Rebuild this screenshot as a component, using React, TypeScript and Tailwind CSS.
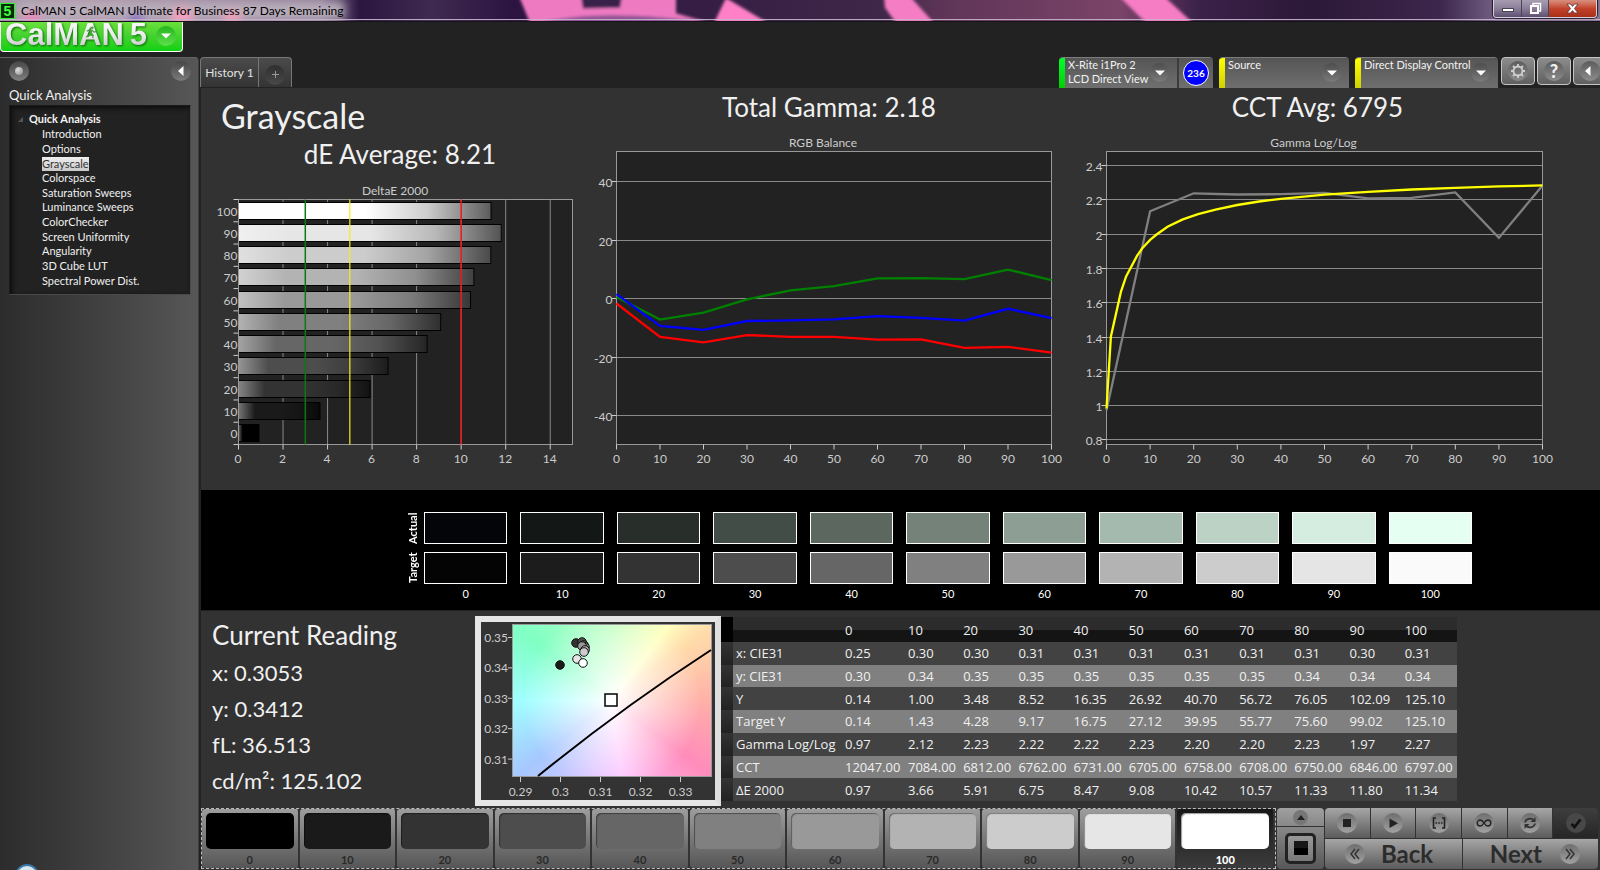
import { useState } from "react";
import type { ReactNode } from "react";
import clsx from "clsx";

type Point = [number, number];

const LEVELS = [0, 10, 20, 30, 40, 50, 60, 70, 80, 90, 100];

const PAGES = [
  "Introduction",
  "Options",
  "Grayscale",
  "Colorspace",
  "Saturation Sweeps",
  "Luminance Sweeps",
  "ColorChecker",
  "Screen Uniformity",
  "Angularity",
  "3D Cube LUT",
  "Spectral Power Dist.",
];

const ACTUAL = [
  "#040508",
  "#131816",
  "#282e2a",
  "#434d47",
  "#5c685f",
  "#74827a",
  "#8d9f95",
  "#a5baaf",
  "#bbd2c5",
  "#d4ede0",
  "#e5fff2",
];

const TARGET = [
  "#040404",
  "#1c1c1c",
  "#333333",
  "#4d4d4d",
  "#666666",
  "#808080",
  "#999999",
  "#b3b3b3",
  "#cccccc",
  "#e5e5e5",
  "#fafafa",
];

const PATCHES = [
  "#000000",
  "#1a1a1a",
  "#333333",
  "#4d4d4d",
  "#666666",
  "#808080",
  "#999999",
  "#b3b3b3",
  "#cccccc",
  "#e6e6e6",
  "#ffffff",
];

const DELTA_E = [0.92, 3.66, 5.91, 6.72, 8.47, 9.08, 10.42, 10.57, 11.33, 11.8, 11.34];

const RGB_BALANCE: { color: string; values: number[] }[] = [
  {
    color: "#008000",
    values: [0.8, -6.9, -4.5, 0, 3.1, 4.5, 7.2, 7.3, 6.9, 10.2, 6.6],
  },
  {
    color: "#ff0000",
    values: [-1.4, -12.8, -14.7, -12.2, -12.8, -12.8, -13.8, -13.7, -16.6, -16.2, -18.2],
  },
  {
    color: "#0000ff",
    values: [1.8, -9.1, -10.4, -7.4, -7.2, -6.8, -5.7, -6.3, -7.3, -3.2, -6.4],
  },
];

const GAMMA_MEASURED = [0.97, 2.13, 2.235, 2.228, 2.23, 2.238, 2.206, 2.208, 2.24, 1.975, 2.28];

const GAMMA_TARGET: Point[] = [
  [0, 0.98],
  [1, 1.4],
  [3.3, 1.66],
  [4.5, 1.75],
  [7, 1.87],
  [8.2, 1.915],
  [10, 1.963],
  [11.5, 1.995],
  [14, 2.04],
  [17.5, 2.083],
  [21, 2.113],
  [25, 2.14],
  [30, 2.167],
  [35, 2.187],
  [40, 2.203],
  [50, 2.227],
  [60, 2.243],
  [70, 2.257],
  [80, 2.267],
  [90, 2.275],
  [100, 2.281],
];

const TABLE: { label: string; values: string[] }[] = [
  {
    label: "x: CIE31",
    values: ["0.25", "0.30", "0.30", "0.31", "0.31", "0.31", "0.31", "0.31", "0.31", "0.30", "0.31"],
  },
  {
    label: "y: CIE31",
    values: ["0.30", "0.34", "0.35", "0.35", "0.35", "0.35", "0.35", "0.35", "0.34", "0.34", "0.34"],
  },
  {
    label: "Y",
    values: ["0.14", "1.00", "3.48", "8.52", "16.35", "26.92", "40.70", "56.72", "76.05", "102.09", "125.10"],
  },
  {
    label: "Target Y",
    values: ["0.14", "1.43", "4.28", "9.17", "16.75", "27.12", "39.95", "55.77", "75.60", "99.02", "125.10"],
  },
  {
    label: "Gamma Log/Log",
    values: ["0.97", "2.12", "2.23", "2.22", "2.22", "2.23", "2.20", "2.20", "2.23", "1.97", "2.27"],
  },
  {
    label: "CCT",
    values: ["12047.00", "7084.00", "6812.00", "6762.00", "6731.00", "6705.00", "6758.00", "6708.00", "6750.00", "6846.00", "6797.00"],
  },
  {
    label: "ΔE 2000",
    values: ["0.97", "3.66", "5.91", "6.75", "8.47", "9.08", "10.42", "10.57", "11.33", "11.80", "11.34"],
  },
];

const toPoints = (points: Point[]) =>
  points.map(([x, y]) => `${x.toFixed(1)},${y.toFixed(1)}`).join(" ");

const TitleBar = () => (
  <header className="relative h-[22px] shrink-0 overflow-hidden border-b border-[#15121a] bg-[#32204a]">
    <svg
      className="absolute inset-0 h-full w-full"
      viewBox="0 0 1600 22"
      preserveAspectRatio="none"
      aria-hidden="true"
    >
      <defs>
        <linearGradient id="aero" x1="0" x2="1" y1="0" y2="0">
          <stop offset="0" stopColor="#9d94a2" />
          <stop offset="0.04" stopColor="#b397ab" />
          <stop offset="0.2" stopColor="#8e7a96" />
          <stop offset="0.225" stopColor="#2b1640" />
          <stop offset="0.27" stopColor="#3f2a50" />
          <stop offset="0.32" stopColor="#2c1440" />
          <stop offset="0.55" stopColor="#3e2748" />
          <stop offset="0.59" stopColor="#5f3557" />
          <stop offset="0.7" stopColor="#7a4468" />
          <stop offset="0.75" stopColor="#3a2148" />
          <stop offset="0.82" stopColor="#2c1838" />
          <stop offset="0.9" stopColor="#3d274c" />
          <stop offset="0.94" stopColor="#79678a" />
          <stop offset="1" stopColor="#8a7490" />
        </linearGradient>
        <filter id="soft" x="-5%" y="-50%" width="110%" height="200%">
          <feGaussianBlur stdDeviation="1.5" />
        </filter>
        <filter id="glow" x="-20%" y="-100%" width="140%" height="300%">
          <feGaussianBlur stdDeviation="5" />
        </filter>
      </defs>
      <rect width="1600" height="22" fill="url(#aero)" />
      <g filter="url(#glow)">
        <rect x="16" y="2" width="328" height="18" fill="#b9afbc" />
        <circle cx="32" cy="21" r="8" fill="#f57bbf" />
        <circle cx="182" cy="19" r="11" fill="#f5a0bd" />
        <circle cx="232" cy="20" r="9" fill="#f0a0b8" />
        <circle cx="136" cy="22" r="8" fill="#7f66c0" />
      </g>
      <g filter="url(#soft)">
        <path d="M519 -4 676 -4 676 14 710 24 530 24Z" fill="#ee7ac2" />
        <path d="M540 24Q600 8 712 24Z" fill="#8f5294" />
        <path d="M581 -4H622L620 8 583 9Z" fill="#38204a" />
        <path d="M726 -2 768 24H714Z" fill="#ff80c6" />
        <path d="M884 -4H910L934 24H896L885 8Z" fill="#f47dc4" />
        <path d="M1119 -4H1164L1193 24H1146Z" fill="#f67bc4" />
      </g>
      <rect y="20" width="1600" height="1" fill="#c6b4cc" />
    </svg>
    <div className="relative flex h-full items-start justify-between">
      <div className="flex items-center gap-[6px] pt-[3px]">
        <span className="flex h-4 w-[15px] items-center justify-center border border-[#2cf02c] bg-[#062c06] font-['Liberation_Sans'] text-[14px] leading-none font-bold text-[#41ff41]">
          5
        </span>
        <h1 className="text-[12px] leading-4 text-black">
          CalMAN 5 CalMAN Ultimate for Business 87 Days Remaining
        </h1>
      </div>
      <div className="mr-[3px] flex h-[18px] overflow-hidden rounded-b-[4px] border border-t-0 border-[#d6cfdd] shadow-[0_0_1px_1px_#241a2c]">
        <button
          aria-label="Minimize"
          className="flex w-7 items-end justify-center border-r border-[#4b4358] bg-linear-to-b from-[#a79db2] via-[#8a7f99] via-50% to-[#5d5070] pb-[5px]"
        >
          <span className="h-1 w-3 border border-[#4b4358] bg-white" />
        </button>
        <button
          aria-label="Restore"
          className="flex w-[27px] items-center justify-center border-r border-[#4b4358] bg-linear-to-b from-[#a79db2] via-[#8a7f99] via-50% to-[#5d5070]"
        >
          <svg width="13" height="13" viewBox="0 0 13 13" fill="none">
            <path d="M4 3V1.5H11.5V9H10" stroke="#fff" strokeWidth="1.5" />
            <rect x="2" y="4" width="7" height="7" stroke="#fff" strokeWidth="2" />
          </svg>
        </button>
        <button
          aria-label="Close"
          className="flex w-[47px] items-center justify-center bg-linear-to-b from-[#d8907f] via-[#c2422a] via-50% to-[#a83018]"
        >
          <svg width="13" height="11" viewBox="0 0 13 11">
            <path
              d="M1 1H4.5L6.5 3.4 8.5 1H12L8.4 5.5 12 10H8.5L6.5 7.6 4.5 10H1L4.6 5.5Z"
              fill="#fff"
              stroke="#5a3038"
              strokeWidth="0.8"
            />
          </svg>
        </button>
      </div>
    </div>
  </header>
);

const Logo = () => (
  <button
    aria-label="CalMAN 5 menu"
    className="relative flex h-[30px] w-[183px] items-center rounded-b-[4px] border border-t-0 border-white bg-linear-to-b from-[#6be03c] via-[#3fd22d] to-[#0bd10e] pb-1 pl-1"
  >
    <span className="bg-linear-to-b from-white via-[#ececec] to-[#b9b9b9] bg-clip-text font-['Liberation_Sans'] text-[31px] leading-9 font-bold text-transparent drop-shadow-[1px_1px_1px_#0a6a0a]">
      CalMAN
    </span>
    <svg className="absolute top-1 left-[84px]" width="12" height="13" viewBox="0 0 14 15" fill="none">
      <circle cx="8.500" cy="2" r="1.600" fill="#4a9a44" />
      <path
        d="M2 6 5 4.500 8.500 5 10.500 7 13 6.500M8 5 6 9 9.500 10.500 9 14M6 9 4 12 1 12.500"
        stroke="#4a9a44"
        strokeWidth="1.400"
      />
    </svg>
    <span className="ml-[6px] bg-linear-to-b from-white via-[#ececec] to-[#b9b9b9] bg-clip-text font-['Liberation_Sans'] text-[31px] leading-9 font-bold text-transparent drop-shadow-[1px_1px_1px_#0a6a0a]">
      5
    </span>
    <span className="absolute top-1 right-[6px] flex size-5 items-center justify-center rounded-full bg-linear-to-b from-[#22b51c] to-[#5de04a]">
      <svg width="10" height="6" viewBox="0 0 10 6">
        <path d="M0 0.500H10L5 5.500Z" fill="#fff" />
      </svg>
    </span>
  </button>
);

const Sidebar = () => {
  const [page, setPage] = useState("Grayscale");

  return (
    <aside className="relative mt-[5px] w-[199px] shrink-0 overflow-hidden rounded-tr-[4px] border-t border-r border-[#636363] border-r-[#3f3f3f] bg-linear-to-r from-[#2c2c2c] to-[#575757] pr-[7px] pl-[9px]">
      <div className="flex items-center justify-between pt-[3px]">
        <button
          aria-label="Pin panel"
          className="flex size-5 items-center justify-center rounded-full bg-linear-to-b from-[#474747] to-[#808080]"
        >
          <span className="size-2 rounded-full bg-[radial-gradient(circle_at_35%_35%,#ddd,#888)]" />
        </button>
        <button
          aria-label="Collapse panel"
          className="flex size-5 items-center justify-center rounded-full bg-linear-to-b from-[#464646] to-[#7c7c7c]"
        >
          <svg width="6" height="10" viewBox="0 0 6 10">
            <path d="M5.500 0V10L0 5Z" fill="#fff" />
          </svg>
        </button>
      </div>
      <h2 className="mt-[6px] text-[13px] leading-4 text-[#f0f0f0]">Quick Analysis</h2>
      <nav className="mt-[2px] border border-[#1a1a1a] border-r-[#4a4a4a] border-b-[#4a4a4a] bg-[#222] pt-[5px] pb-[6px] shadow-[inset_2px_2px_5px_#0c0c0c]">
        <div className="flex items-center gap-[6px] pl-2">
          <svg width="5" height="5" viewBox="0 0 5 5">
            <path d="M5 0V5H0Z" fill="#555" />
          </svg>
          <span className="text-[11px] leading-4 font-bold text-[#f2f2f2]">Quick Analysis</span>
        </div>
        <ul className="grid h-[161px] auto-rows-fr pl-8">
          {PAGES.map((name) => (
            <li key={name} className="flex items-center">
              <a
                href="#"
                onClick={() => setPage(name)}
                className={clsx(
                  "text-[11px] leading-[14px]",
                  page === name
                    ? "bg-linear-to-b from-[#f0f0f0] to-[#c8c8c8] text-[#333]"
                    : "text-[#f0f0f0]",
                )}
              >
                {name}
              </a>
            </li>
          ))}
        </ul>
      </nav>
      <span className="absolute -bottom-[18px] left-[15px] size-6 rounded-full border-2 border-[#3a78a8] bg-[#dbe6ee]" />
    </aside>
  );
};

const ArrowDown = () => (
  <span className="flex size-[19px] shrink-0 items-center justify-center rounded-full bg-linear-to-b from-[#4e4e4e] to-[#7a7a7a]">
    <svg width="10" height="6" viewBox="0 0 10 6">
      <path d="M0 0.500H10L5 5.500Z" fill="#fff" />
    </svg>
  </span>
);

const DevicePanel = ({
  lines,
  className,
  strip,
}: {
  lines: string[];
  className: string;
  strip: string;
}) => (
  <button
    className={clsx(
      "flex h-[30px] overflow-hidden bg-linear-to-b from-[#555] to-[#6f6f6f] text-left",
      className,
    )}
  >
    <span className={clsx("h-full w-[6px] shrink-0", strip)} />
    <span className="flex-1 pl-[3px] text-[11px] leading-[14px] whitespace-nowrap text-[#f2f2f2]">
      {lines.map((line) => (
        <span key={line} className="block">
          {line}
        </span>
      ))}
    </span>
    <span className="mt-[5px] mr-[8px]">
      <ArrowDown />
    </span>
  </button>
);

const ToolButton = ({ label, children }: { label: string; children: ReactNode }) => (
  <button
    aria-label={label}
    className="flex h-7 w-[34px] shrink-0 items-center justify-center rounded-[4px] border border-[#c4c4c4] bg-linear-to-b from-[#8c8c8c] to-[#606060]"
  >
    <span className="flex size-5 items-center justify-center rounded-full bg-linear-to-b from-[#5c5c5c] to-[#8c8c8c]">
      {children}
    </span>
  </button>
);

const TopBar = () => (
  <div className="flex h-[31px] items-start justify-between">
    <div className="flex h-[30px] overflow-hidden rounded-t-[4px] border border-b-0 border-[#777] bg-linear-to-b from-[#4b4b4b] to-[#343434]">
      <button className="w-[58px] border-r border-[#777] text-[12px] text-[#e2e2e2]">History 1</button>
      <button aria-label="New history" className="flex w-8 items-center justify-center pt-[4px]">
        <span className="flex size-5 items-center justify-center rounded-full bg-linear-to-b from-[#2e2e2e] to-[#4a4a4a]">
          <svg width="7" height="7" viewBox="0 0 7 7">
            <path d="M3.500 0V7M0 3.500H7" stroke="#999" />
          </svg>
        </span>
      </button>
    </div>
    <div className="flex gap-[2px] overflow-hidden">
      <div className="mr-1 flex overflow-hidden rounded-t-[4px] border-t border-[#7c7c7c]">
        <DevicePanel
          lines={["X-Rite i1Pro 2", "LCD Direct View"]}
          className="w-[118px]"
          strip="bg-linear-to-b from-[#00ff2a] to-[#00d000]"
        />
        <div className="flex w-9 items-center justify-center border-l-2 border-[#3c3c3c] bg-linear-to-b from-[#555] to-[#6f6f6f]">
          <span className="flex size-[26px] items-center justify-center rounded-full border border-white bg-[#0000ff] text-[10px] font-bold text-white">
            236
          </span>
        </div>
      </div>
      <div className="mr-1 overflow-hidden rounded-t-[4px] border-t border-[#7c7c7c]">
        <DevicePanel
          lines={["Source"]}
          className="w-[130px]"
          strip="bg-linear-to-b from-[#ffff00] to-[#d0d000]"
        />
      </div>
      <div className="mr-px overflow-hidden rounded-t-[4px] border-t border-[#7c7c7c]">
        <DevicePanel
          lines={["Direct Display Control"]}
          className="w-[143px]"
          strip="bg-linear-to-b from-[#ffff00] to-[#d0d000]"
        />
      </div>
      <ToolButton label="Settings">
        <svg width="16" height="16" viewBox="0 0 16 16" fill="none" stroke="#d0d0d0">
          <circle cx="8" cy="8" r="4.500" strokeWidth="1.800" />
          <path
            d="M8 1V3M8 13V15M1 8H3M13 8H15M3 3 4.500 4.500M11.500 11.500 13 13M3 13 4.500 11.500M11.500 4.500 13 3"
            strokeWidth="1.800"
          />
        </svg>
      </ToolButton>
      <ToolButton label="Help">
        <span className="text-[18px] leading-none font-black text-[#f0f0f0]">?</span>
      </ToolButton>
      <div className="w-[27px] overflow-hidden">
        <ToolButton label="Collapse">
          <svg className="mr-1" width="6" height="10" viewBox="0 0 6 10">
            <path d="M5.500 0V10L0 5Z" fill="#fff" />
          </svg>
        </ToolButton>
      </div>
    </div>
  </div>
);

const DeltaEChart = () => {
  const left = 37.5;
  const right = 371.5;
  const top = 19.5;
  const bottom = 264.5;
  const unit = (right - left) / 15;
  const row = (bottom - top) / 11;
  const evens = [0, 2, 4, 6, 8, 10, 12, 14];

  return (
    <svg className="block w-full font-['Lato'] text-[12px]" viewBox="0 0 390 300" fill="#ccc">
      <defs>
        <linearGradient id="bar-shade" x1="0" x2="1" y1="0" y2="0">
          <stop offset="0" stopColor="#fff" stopOpacity="0.4" />
          <stop offset="0.2" stopColor="#fff" stopOpacity="0" />
          <stop offset="0.5" stopColor="#000" stopOpacity="0" />
          <stop offset="0.75" stopColor="#000" stopOpacity="0.2" />
          <stop offset="1" stopColor="#000" stopOpacity="0.64" />
        </linearGradient>
      </defs>
      <text x="194" y="15" textAnchor="middle">
        DeltaE 2000
      </text>
      <rect x={left} y={top} width={right - left} height={bottom - top} fill="#222" stroke="#999" />
      {evens.map((v) => (
        <g key={v}>
          <path d={`M${left + v * unit} ${top}V${bottom}`} stroke="#8a8a8a" />
          <path d={`M${left + v * unit} ${bottom}V${bottom + 5}`} stroke="#ccc" />
          <text x={left + v * unit - 0.5} y="283" textAnchor="middle">
            {v}
          </text>
        </g>
      ))}
      {LEVELS.map((level, i) => {
        const y = Math.round(bottom - (i + 1) * row + 2) + 0.5;
        return (
          <g key={level}>
            <rect x={left} y={y} width={DELTA_E[i] * unit} height="17" fill={PATCHES[i]} />
            <rect
              x={left}
              y={y}
              width={DELTA_E[i] * unit}
              height="17"
              fill="url(#bar-shade)"
              stroke="#000"
            />
            <path d={`M${left - 5} ${bottom - (i + 1) * row}H${left}`} stroke="#ccc" />
            <text x={left - 1} y={y + 13.5} textAnchor="end">
              {level}
            </text>
          </g>
        );
      })}
      <path d={`M${left - 5} ${bottom}H${left}`} stroke="#ccc" />
      <path d={`M${left} ${top}V${bottom}`} stroke="#999" />
      <path d={`M${left + 3 * unit} ${top}V${bottom}`} stroke="#0a7a10" strokeWidth="1.5" />
      <path d={`M${left + 5 * unit} ${top}V${bottom}`} stroke="#f4ec20" strokeWidth="1.2" />
      <path d={`M${left + 10 * unit} ${top}V${bottom}`} stroke="#f01818" strokeWidth="1.5" />
    </svg>
  );
};

const LineChart = ({
  title,
  width,
  left,
  right,
  ticks,
  toY,
  children,
}: {
  title: string;
  width: number;
  left: number;
  right: number;
  ticks: number[];
  toY: (v: number) => number;
  children: ReactNode;
}) => {
  const top = 21.5;
  const bottom = 314.5;

  return (
    <svg className="block w-full font-['Lato'] text-[12px]" viewBox={`0 0 ${width} 350`} fill="#ccc">
      <text x={(left + right) / 2 - 11} y="17" textAnchor="middle">
        {title}
      </text>
      <rect x={left} y={top} width={right - left} height={bottom - top} fill="#222" stroke="#999" />
      {ticks.map((v) => {
        const y = Math.round(toY(v)) + 0.5;
        return (
          <g key={v}>
            <path d={`M${left} ${y}H${right}`} stroke="#8a8a8a" />
            <path d={`M${left - 5} ${y}H${left}`} stroke="#ccc" />
            <text x={left - 4} y={y + 5} textAnchor="end">
              {v}
            </text>
          </g>
        );
      })}
      {LEVELS.map((v) => {
        const x = left + ((right - left) * v) / 100;
        return (
          <g key={v}>
            <path d={`M${x} ${bottom}V${bottom + 5}`} stroke="#ccc" />
            <text x={x} y="333" textAnchor="middle">
              {v}
            </text>
          </g>
        );
      })}
      {children}
    </svg>
  );
};

const RgbBalanceChart = () => {
  const left = 25.5;
  const right = 460.5;
  const toX = (i: number) => left + ((right - left) * i) / 10;
  const toY = (v: number) => 168.4 - v * 2.923;

  return (
    <LineChart
      title="RGB Balance"
      width={480}
      left={left}
      right={right}
      ticks={[40, 20, 0, -20, -40]}
      toY={toY}
    >
      {RGB_BALANCE.map(({ color, values }) => (
        <polyline
          key={color}
          points={toPoints(values.map((v, i): Point => [toX(i), toY(v) + 1]))}
          fill="none"
          stroke={color}
          strokeWidth="2.3"
        />
      ))}
    </LineChart>
  );
};

const GammaChart = () => {
  const left = 35.5;
  const right = 471.5;
  const toX = (v: number) => left + ((right - left) * v) / 100;
  const toY = (v: number) => 35 + (2.4 - v) * 171.5;

  return (
    <LineChart
      title="Gamma Log/Log"
      width={489}
      left={left}
      right={right}
      ticks={[2.4, 2.2, 2, 1.8, 1.6, 1.4, 1.2, 1, 0.8]}
      toY={toY}
    >
      <polyline
        points={toPoints(GAMMA_MEASURED.map((v, i): Point => [toX(i * 10), toY(v)]))}
        fill="none"
        stroke="#808080"
        strokeWidth="2.3"
      />
      <polyline
        points={toPoints(GAMMA_TARGET.map(([x, y]): Point => [toX(x), toY(y)]))}
        fill="none"
        stroke="#ffff00"
        strokeWidth="2.3"
      />
    </LineChart>
  );
};

const Charts = () => (
  <section className="grid grid-cols-[minmax(0,390fr)_minmax(0,480fr)_minmax(0,489fr)] pr-10 text-[#f0f0f0]">
    <div>
      <h2 className="pt-2 pl-5 text-[34px] leading-10">Grayscale</h2>
      <p className="pt-[2px] pl-2 text-center text-[26px] leading-8">dE Average: 8.21</p>
      <div className="pt-[10px]">
        <DeltaEChart />
      </div>
    </div>
    <div>
      <p className="pt-[3px] pr-1 text-center text-[26px] leading-8">Total Gamma: 2.18</p>
      <div className="pt-[7px]">
        <RgbBalanceChart />
      </div>
    </div>
    <div>
      <p className="pt-[3px] pl-1 text-center text-[26px] leading-8">CCT Avg: 6795</p>
      <div className="pt-[7px]">
        <GammaChart />
      </div>
    </div>
  </section>
);

const Swatches = () => (
  <section className="mt-[10px] flex h-[120px] gap-[6px] bg-black pt-[22px] pr-32 pl-[207px] text-[11px] text-white">
    <div className="flex w-[10px] flex-col gap-2 leading-[10px] font-bold">
      <span className="h-8 rotate-180 text-center [writing-mode:vertical-rl]">Actual</span>
      <span className="h-8 rotate-180 text-center [writing-mode:vertical-rl]">Target</span>
    </div>
    <div className="grid flex-1 grid-cols-11 gap-[13px]">
      {LEVELS.map((level, i) => (
        <div key={level}>
          <div className="flex flex-col gap-2">
            <div className="h-8 border border-white" style={{ backgroundColor: ACTUAL[i] }} />
            <div className="h-8 border border-white" style={{ backgroundColor: TARGET[i] }} />
          </div>
          <p className="pt-1 text-center leading-none">{level}</p>
        </div>
      ))}
    </div>
  </section>
);

const SAMPLES: { x: number; y: number; fill: string }[] = [
  { x: 79, y: 43, fill: "#1a1a1a" },
  { x: 95, y: 21, fill: "#333" },
  { x: 101, y: 20, fill: "#4d4d4d" },
  { x: 103, y: 23, fill: "#666" },
  { x: 104, y: 25, fill: "#808080" },
  { x: 101, y: 24, fill: "#999" },
  { x: 104, y: 28, fill: "#b3b3b3" },
  { x: 103, y: 30, fill: "#ccc" },
  { x: 96, y: 37, fill: "#e6e6e6" },
  { x: 102, y: 41, fill: "#fff" },
];

const ChromaticityChart = () => (
  <div className="w-[246px] shrink-0 border-[6px] border-[#e6e6e6] border-r-[#dedede] bg-[#333]">
    <svg className="block w-full font-['Lato'] text-[12px]" viewBox="0 0 234 178" fill="#ccc">
      <foreignObject x="32" y="3" width="198" height="151">
        <div className="h-full w-full bg-[radial-gradient(circle_at_50%_50%,#ffffff_0%,#ffffff00_72%),conic-gradient(from_0deg_at_50%_50%,#c4ffc4_0deg,#ffffbe_37deg,#ffdcaa_53deg,#ffb0a8_90deg,#ff8cba_127deg,#ffc4ff_172deg,#a6c8ff_232deg,#a0ffff_270deg,#80ffc4_307deg,#c4ffc4_360deg)]" />
      </foreignObject>
      <rect x="31.500" y="2.500" width="199" height="152" fill="none" stroke="#999" />
      <path d="M57 154Q142 85 230 28" fill="none" stroke="#000" strokeWidth="2" />
      {SAMPLES.map(({ x, y, fill }) => (
        <circle key={`${x}-${y}`} cx={x} cy={y} r="4.300" fill={fill} stroke="#111" />
      ))}
      <rect x="124" y="72" width="12" height="12" fill="#fff" stroke="#000" strokeWidth="1.500" />
      {[0.35, 0.34, 0.33, 0.32, 0.31].map((v, i) => (
        <g key={v}>
          <path d={`M27 ${15.5 + i * 30.4}h4`} stroke="#ccc" />
          <text x="27" y={20 + i * 30.4} textAnchor="end">
            {v}
          </text>
        </g>
      ))}
      {[0.29, 0.3, 0.31, 0.32, 0.33].map((v, i) => (
        <g key={v}>
          <path d={`M${39.5 + i * 40} 155v5`} stroke="#ccc" />
          <text x={39.5 + i * 40} y="174" textAnchor="middle">
            {v}
          </text>
        </g>
      ))}
    </svg>
  </div>
);

const ResultsTable = () => (
  <table className="mt-[1px] mr-[143px] h-[184px] flex-1 table-fixed text-left font-['Open_Sans'] text-[13px] leading-4 whitespace-nowrap text-[#f0f0f0]">
    <colgroup>
      <col className="w-3" />
      <col className="w-[109px]" />
      <col className="w-[63px]" />
    </colgroup>
    <thead>
      <tr className="h-[25px] bg-linear-to-b from-[#2c2c2c] from-50% to-[#141414] to-50%">
        <th className="bg-black p-0" />
        <th className="p-0" />
        {LEVELS.map((level) => (
          <th key={level} className="p-0 pl-[3px] font-normal">
            {level}
          </th>
        ))}
      </tr>
    </thead>
    <tbody>
      {TABLE.map(({ label, values }, i) => (
        <tr key={label} className={i % 2 ? "bg-[#808080]" : "bg-[#424242]"}>
          <td className="bg-linear-to-b from-[#333] to-[#222] p-0" />
          <th scope="row" className="p-0 pl-[3px] font-normal">
            {label}
          </th>
          {values.map((value, j) => (
            <td key={j} className="p-0 pl-[3px]">
              {value}
            </td>
          ))}
        </tr>
      ))}
    </tbody>
  </table>
);

const Readings = () => (
  <section className="flex h-[198px] items-start border-t border-[#222] pt-[5px]">
    <div className="w-[274px] shrink-0 pt-px pl-[11px] text-[22px] leading-9 text-[#f0f0f0]">
      <h2 className="mb-[2px] text-[26px] leading-9">Current Reading</h2>
      <p>x: 0.3053</p>
      <p>y: 0.3412</p>
      <p>fL: 36.513</p>
      <p>cd/m²: 125.102</p>
    </div>
    <ChromaticityChart />
    <ResultsTable />
  </section>
);

const ControlIcon = ({ children }: { children: ReactNode }) => (
  <span className="flex size-5 items-center justify-center rounded-full bg-linear-to-b from-[#6e6e6e] to-[#a2a2a2]">
    {children}
  </span>
);

const CONTROLS: { label: string; icon: ReactNode }[] = [
  { label: "Stop", icon: <rect x="4" y="4" width="8" height="8" fill="#222" /> },
  { label: "Play", icon: <path d="M4.500 3.500V13L13 8.300Z" fill="#222" /> },
  {
    label: "Read series",
    icon: (
      <path
        d="M5 3H2.500V13H5M11 3H13.500V13H11M4.500 8H6M7.200 8H8.800M10 8H11.500"
        fill="none"
        stroke="#222"
        strokeWidth="1.600"
      />
    ),
  },
  {
    label: "Read continuously",
    icon: (
      <path
        d="M8 8C6.500 5.500 5.500 5 4.200 5A3 3 0 0 0 4.200 11C5.500 11 6.500 10.500 8 8S10.500 5 11.800 5A3 3 0 0 1 11.800 11C10.500 11 9.500 10.500 8 8Z"
        fill="none"
        stroke="#222"
        strokeWidth="1.400"
      />
    ),
  },
  {
    label: "Refresh",
    icon: (
      <g fill="none" stroke="#333" strokeWidth="1.800">
        <path d="M3 7.500C3.500 3.500 9 2.500 11.500 5M13 8.500C12.500 12.500 7 13.500 4.500 11" />
        <path d="M13.500 2V7H8.500ZM2.500 14V9H7.500Z" fill="#333" stroke="none" />
      </g>
    ),
  },
];

const Footer = () => {
  const [selected, setSelected] = useState(100);

  return (
    <footer className="flex h-[62px] pb-px">
      <div className="grid flex-1 grid-cols-11 border border-dashed border-[#bbb]">
        {LEVELS.map((level, i) => (
          <button
            key={level}
            onClick={() => setSelected(level)}
            className={clsx(
              "flex flex-col items-center gap-[5px] rounded-[3px] border-r-2 border-[#333] px-1 pt-1",
              selected === level
                ? "bg-linear-to-b from-[#181818] to-[#3c3c3c] font-black text-white"
                : "bg-linear-to-b from-[#9d9d9d] to-[#565656] font-bold text-[#2a2a2a]",
            )}
          >
            <span
              className="h-9 w-full rounded-[5px] shadow-[inset_1px_1px_1px_#0006]"
              style={{ backgroundColor: PATCHES[i] }}
            />
            <span className="text-[11px] leading-3">{level}</span>
          </button>
        ))}
      </div>
      <div className="flex w-[48px] flex-col gap-px pl-px">
        <button
          aria-label="Expand"
          className="flex h-[18px] items-center justify-center rounded-t-[4px] bg-linear-to-b from-[#a0a0a0] to-[#888]"
        >
          <span className="flex size-[15px] items-center justify-center rounded-full bg-[#777]">
            <svg width="8" height="5" viewBox="0 0 8 5">
              <path d="M4 0 8 5H0Z" fill="#222" />
            </svg>
          </span>
        </button>
        <button
          aria-label="Pattern"
          className="flex flex-1 items-center justify-center rounded-b-[4px] bg-linear-to-b from-[#888] to-[#585858]"
        >
          <span className="flex size-[31px] items-center justify-center rounded-[5px] border-[3px] border-[#222] bg-linear-to-b from-[#999] to-[#777]">
            <span className="size-[14px] bg-linear-to-b from-[#181818] from-50% to-black to-50%" />
          </span>
        </button>
      </div>
      <div className="flex w-[276px] flex-col gap-px pr-[2px] pl-px">
        <div className="flex h-[30px] gap-px">
          {CONTROLS.map(({ label, icon }) => (
            <button
              key={label}
              aria-label={label}
              className="flex flex-1 items-center justify-center bg-linear-to-b from-[#a6a6a6] to-[#5c5c5c] first:rounded-tl-[4px]"
            >
              <ControlIcon>
                <svg width="16" height="16" viewBox="0 0 16 16">
                  {icon}
                </svg>
              </ControlIcon>
            </button>
          ))}
          <button
            aria-label="Accept"
            className="flex flex-1 items-center justify-center rounded-tr-[4px] bg-linear-to-b from-[#3e3e3e] to-[#262626]"
          >
            <span className="flex size-5 items-center justify-center rounded-full bg-[#484848]">
              <svg width="12" height="11" viewBox="0 0 12 11" fill="none">
                <path d="M1.500 6 4.500 9 10.500 1.500" stroke="#111" strokeWidth="2.800" />
              </svg>
            </span>
          </button>
        </div>
        <div className="flex flex-1 gap-px text-[24px] leading-none font-bold text-[#2c2c2c]">
          <button className="flex flex-1 items-center gap-4 rounded-bl-[4px] bg-linear-to-b from-[#a6a6a6] to-[#5c5c5c] pl-5">
            <ControlIcon>
              <svg width="12" height="12" viewBox="0 0 12 12" fill="none">
                <path d="M6 1 2 6 6 11M10 1 6 6 10 11" stroke="#333" strokeWidth="1.500" />
              </svg>
            </ControlIcon>
            Back
          </button>
          <button className="flex flex-1 items-center justify-end gap-[18px] rounded-br-[4px] bg-linear-to-b from-[#a6a6a6] to-[#5c5c5c] pr-[18px]">
            Next
            <ControlIcon>
              <svg width="12" height="12" viewBox="0 0 12 12" fill="none">
                <path d="M2 1 6 6 2 11M6 1 10 6 6 11" stroke="#333" strokeWidth="1.500" />
              </svg>
            </ControlIcon>
          </button>
        </div>
      </div>
    </footer>
  );
};

const App = () => (
  <div className="flex min-h-screen flex-col overflow-hidden bg-[#222] font-['Lato',sans-serif]">
    <TitleBar />
    <div className="h-[30px]">
      <Logo />
    </div>
    <div className="flex flex-1">
      <Sidebar />
      <div className="min-w-0 flex-1 pt-[5px] pl-[1px]">
        <TopBar />
        <main className="border-l border-[#222] bg-[#323232]">
          <Charts />
          <Swatches />
          <Readings />
          <Footer />
        </main>
      </div>
    </div>
  </div>
);

export default App;
